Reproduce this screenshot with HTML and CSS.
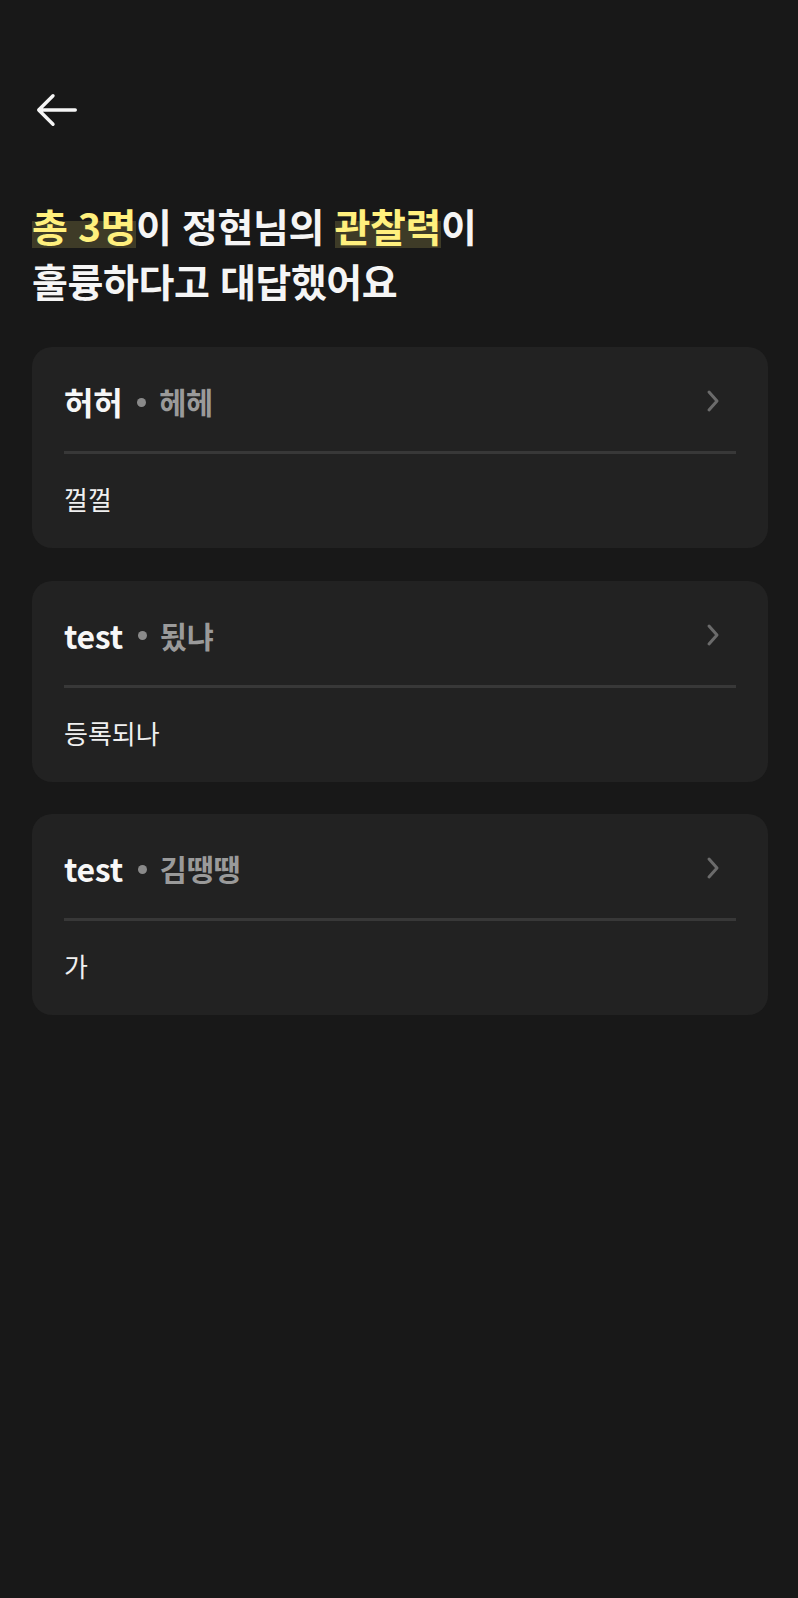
FILE: index.html
```html
<!DOCTYPE html>
<html lang="ko">
<head>
<meta charset="utf-8">
<title>관찰력</title>
<link rel="stylesheet" href="styles.css">
</head>
<body>
<div class="page">
  <header class="header">
    <button class="back" aria-label="뒤로">
      <svg width="48" height="48" viewBox="0 0 48 48" fill="none" stroke="#f5f5f5" stroke-width="3.4" stroke-linecap="round" stroke-linejoin="round">
        <path d="M43.3 24 H6.7 M21 9.7 L6.7 24 L21 38.3"/>
      </svg>
    </button>
  </header>
  <h1 class="title"><span class="hl">총 3명</span>이 정현님의 <span class="hl">관찰력</span>이<br>훌륭하다고 대답했어요</h1>
  <div class="list">
    <div class="card">
      <div class="card-head">
        <div class="names"><span class="name">허허</span><span class="dot"></span><span class="sub">헤헤</span></div>
        <svg class="chev" width="14" height="24" viewBox="0 0 14 24" fill="none" stroke="#6b6b6b" stroke-width="3" stroke-linecap="round" stroke-linejoin="round"><path d="M3 3 L11 12 L3 21"/></svg>
      </div>
      <div class="divider"></div>
      <p class="body">껄껄</p>
    </div>
    <div class="card">
      <div class="card-head">
        <div class="names"><span class="name">test</span><span class="dot"></span><span class="sub">됬냐</span></div>
        <svg class="chev" width="14" height="24" viewBox="0 0 14 24" fill="none" stroke="#6b6b6b" stroke-width="3" stroke-linecap="round" stroke-linejoin="round"><path d="M3 3 L11 12 L3 21"/></svg>
      </div>
      <div class="divider"></div>
      <p class="body">등록되나</p>
    </div>
    <div class="card">
      <div class="card-head">
        <div class="names"><span class="name">test</span><span class="dot"></span><span class="sub">김땡땡</span></div>
        <svg class="chev" width="14" height="24" viewBox="0 0 14 24" fill="none" stroke="#6b6b6b" stroke-width="3" stroke-linecap="round" stroke-linejoin="round"><path d="M3 3 L11 12 L3 21"/></svg>
      </div>
      <div class="divider"></div>
      <p class="body">가</p>
    </div>
  </div>
</div>
</body>
</html>
```

FILE: styles.css
```css
html, body {
  margin: 0;
  padding: 0;
  background: #181818;
}
body {
  font-family: "Noto Sans CJK KR", "Noto Sans", sans-serif;
  color: #f5f5f5;
  min-height: 1598px;
}
.page {
  padding: 0 30px 0 32px;
}
.header {
  padding-top: 86px;
  height: 48px;
}
.back {
  display: block;
  padding: 0;
  margin: 0;
  border: 0;
  background: none;
  width: 48px;
  height: 48px;
}
.back svg {
  display: block;
}
.title {
  margin: 64px 0 0;
  font-size: 39px;
  line-height: 55px;
  font-weight: 700;
  letter-spacing: -0.4px;
  color: #f5f5f5;
}
.hl {
  color: #fff07d;
  background: linear-gradient(to bottom, transparent 0, transparent 42%, #3e3b27 42%, #3e3b27 100%);
  background-size: 100% 46px;
  background-repeat: no-repeat;
  background-position: 0 5px;
}
.list {
  margin-top: 39px;
  display: flex;
  flex-direction: column;
  gap: 32.5px;
}
.card {
  background: #222222;
  border-radius: 20px;
  padding: 34px 32px 31px;
}
.card-head {
  display: flex;
  align-items: center;
  justify-content: space-between;
  height: 40px;
}
.names {
  display: flex;
  align-items: center;
  font-size: 32px;
  line-height: 40px;
  font-weight: 700;
  letter-spacing: -0.3px;
}
.name {
  color: #f7f7f7;
}
.dot {
  width: 9px;
  height: 9px;
  border-radius: 50%;
  background: #8a8a8a;
  margin: 2px 13px 0 15px;
}
.sub {
  color: #9a9a9a;
  font-size: 29.5px;
}
.chev {
  display: block;
  margin-right: 16px;
}
.divider {
  height: 3px;
  background: #383838;
  margin-top: 30px;
}
.body {
  margin: 27px 0 0;
  font-size: 26px;
  line-height: 36px;
  font-weight: 400;
  color: #f0f0f0;
}
```
